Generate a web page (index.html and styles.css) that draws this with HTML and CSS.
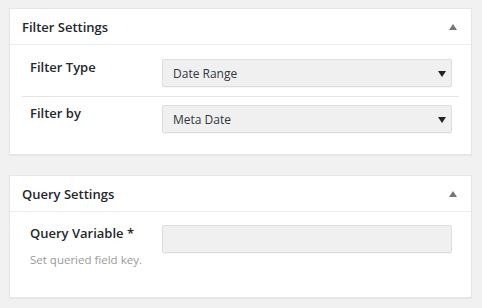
FILE: index.html
```html
<!DOCTYPE html>
<html lang="en">
<head>
    <meta charset="UTF-8">
    <meta name="viewport" content="width=device-width, initial-scale=1.0">
    <title>Filter Settings</title>
    <link rel="stylesheet" href="styles.css">
</head>
<body>

    <div class="postbox">
        <div class="postbox-header">
            <h2>Filter Settings</h2>
            <span class="toggle"></span>
        </div>
        <div class="inside">
            <div class="field-row">
                <label for="filterType">Filter Type</label>
                <div class="select-wrap">
                    <select id="filterType">
                        <option>Date Range</option>
                        <option>Taxonomy</option>
                        <option>Search</option>
                    </select>
                </div>
            </div>
            <div class="field-row">
                <label for="filterBy">Filter by</label>
                <div class="select-wrap">
                    <select id="filterBy">
                        <option>Meta Date</option>
                        <option>Post Date</option>
                    </select>
                </div>
            </div>
        </div>
    </div>

    <div class="postbox">
        <div class="postbox-header">
            <h2>Query Settings</h2>
            <span class="toggle"></span>
        </div>
        <div class="inside">
            <div class="field-row plain">
                <div class="label-col">
                    <label for="queryVar">Query Variable *</label>
                    <p class="description">Set queried field key.</p>
                </div>
                <input type="text" id="queryVar">
            </div>
        </div>
    </div>

</body>
</html>
```

FILE: styles.css
```css
body { margin: 0; padding: 8px 10px 0 9px; background: #f1f1f1; font-family: "Open Sans", "Noto Sans", sans-serif; color: #23282d; }
.postbox { background: #fff; border: 1px solid #e5e5e5; box-shadow: 0 1px 1px rgba(0,0,0,.04); margin-bottom: 20px; }
.postbox-header { height: 35px; display: flex; align-items: center; justify-content: space-between; padding: 0 12px; border-bottom: 1px solid #eee; }
.postbox-header h2 { margin: 0; font-size: 13px; font-weight: 600; }
.toggle { width: 0; height: 0; border-left: 4px solid transparent; border-right: 4px solid transparent; border-bottom: 6px solid #72777c; margin-right: 2px; }
.inside { padding: 6px 12px 12px; }
.field-row { display: flex; align-items: flex-start; padding: 8px 7px 9px 8px; border-bottom: 1px solid #e5e5e5; }
.field-row:last-child { border-bottom: none; }
.field-row label { display: block; width: 132px; flex-shrink: 0; font-size: 13px; font-weight: 600; line-height: 16px; }
.select-wrap { flex: 1; position: relative; }
.select-wrap::after { content: ""; position: absolute; right: 6px; top: 12px; border-left: 4px solid transparent; border-right: 4px solid transparent; border-top: 6px solid #222; pointer-events: none; }
select, input[type="text"] { width: 100%; height: 28px; margin: 0; padding: 0 10px; box-sizing: border-box; border: 1px solid #ddd; border-radius: 2px; background: #f0f0f0; font-family: inherit; font-size: 12px; color: #32373c; -webkit-appearance: none; appearance: none; box-shadow: 0 1px 1px rgba(0,0,0,.04); outline: none; }
.plain { padding-top: 7px; padding-bottom: 17px; }
.label-col { width: 132px; flex-shrink: 0; }
.description { margin: 11px 0 0; font-size: 11.5px; line-height: 16px; color: #999; }
```
